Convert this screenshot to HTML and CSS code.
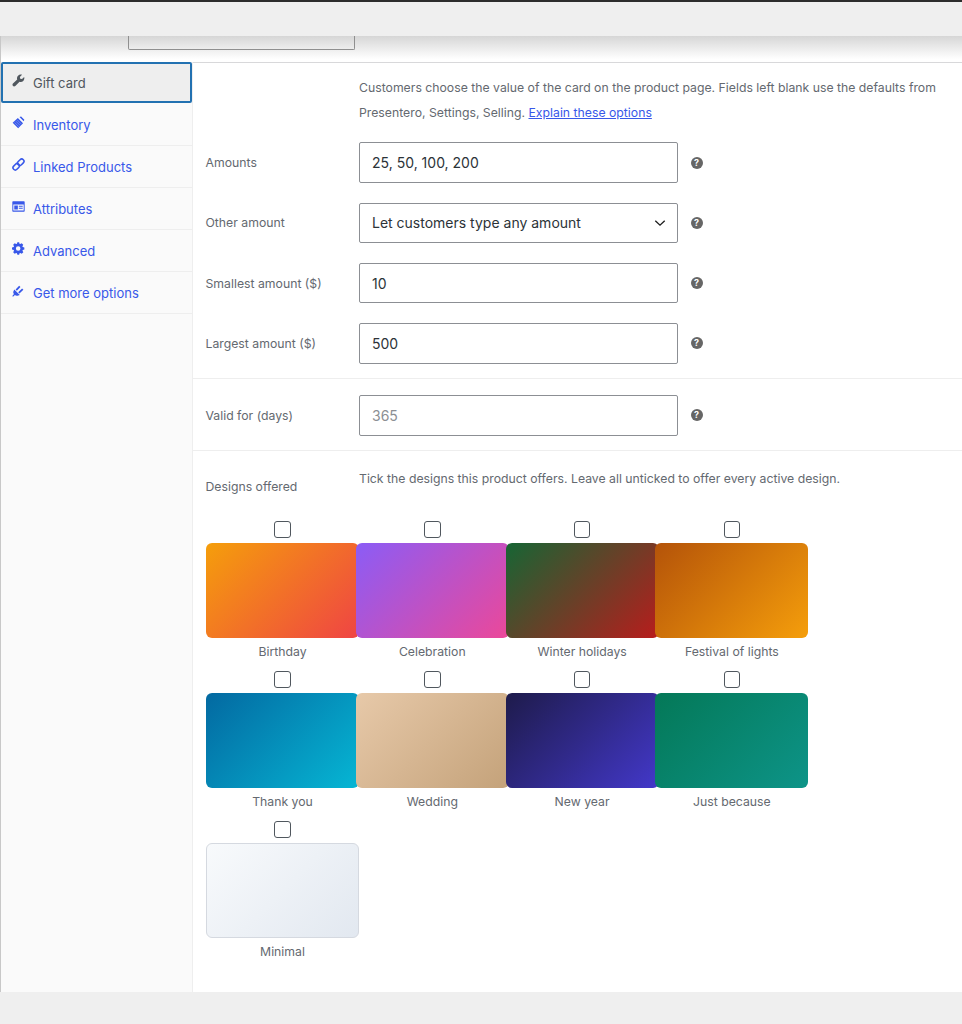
FILE: index.html
```html
<!DOCTYPE html>
<html lang="en">
<head>
    <meta charset="UTF-8">
    <title>Gift card options</title>
    <link rel="stylesheet" href="styles.css">
</head>
<body>
    <div class="topbar"></div>

    <div class="panel">
        <!-- What is left of the field above the tabs -->
        <div class="panel-head">
            <div class="cut-input"></div>
        </div>

        <div class="product-data">
            <ul class="tabs">
                <li class="tab active">
                    <svg class="tab-icon" viewBox="0 0 20 20"><path d="M18.700 4.600l-3.300 3.200-2.700-.6-.6-2.700L15.400 1.300c-2.100-.8-4.500-.3-6.100 1.300-1.500 1.500-2 3.700-1.300 5.700L1.500 14.800c-1 1-1 2.600 0 3.600.9 1 2.600 1 3.600 0l6.500-6.500c2 .7 4.200.2 5.700-1.300 1.600-1.600 2.100-4 1.400-6z"/></svg>
                    <span>Gift card</span>
                </li>
                <li class="tab">
                    <svg class="tab-icon" viewBox="0 0 20 20">
                        <path d="M9 3.200l8 8-7.500 7.800L1 10.500zM11.500 1.700L14 .700l5 5-1 2.500z"/>
                        <path class="stripes" d="M6 8l6.500 6.500M8 6l6.500 6.500M4 10l6.500 6.500"/>
                    </svg>
                    <span>Inventory</span>
                </li>
                <li class="tab">
                    <svg class="tab-icon" viewBox="0 0 20 20"><g fill="none" stroke="currentColor" stroke-width="2.400"><rect x="8" y="3" width="11" height="7" rx="3.500" transform="rotate(-45 13.500 6.500)"/><rect x="1" y="10" width="11" height="7" rx="3.500" transform="rotate(-45 6.500 13.500)"/></g></svg>
                    <span>Linked Products</span>
                </li>
                <li class="tab">
                    <svg class="tab-icon" viewBox="0 0 20 20"><path fill-rule="evenodd" d="M1.500 2h17c.5 0 1 .4 1 1v14c0 .6-.5 1-1 1h-17c-.5 0-1-.4-1-1V3c0-.6.500-1 1-1zm.5 5v9h16V7zm1.500 1.500h5.500v6H3.500zm7 .5h6v1.500h-6zm0 3h6v1.500h-6z"/></svg>
                    <span>Attributes</span>
                </li>
                <li class="tab">
                    <svg class="tab-icon" viewBox="0 0 20 20"><path fill-rule="evenodd" d="M19 11.700V8.300l-2.500-.6-.5-1.200 1.300-2.200-2.400-2.400-2.200 1.300-1.200-.5L11 .200H8.300l-.7 2.500-1.200.5-2.200-1.300-2.400 2.400 1.300 2.200-.5 1.200L0 8.300v3.400l2.600.6.500 1.200-1.300 2.200 2.400 2.400 2.200-1.300 1.200.5.700 2.500H11l.6-2.500 1.200-.5 2.200 1.300 2.400-2.400-1.300-2.200.5-1.200zM9.500 13.500a3.500 3.500 0 1 1 0-7 3.500 3.500 0 0 1 0 7z"/></svg>
                    <span>Advanced</span>
                </li>
                <li class="tab">
                    <svg class="tab-icon" viewBox="0 0 20 20"><path d="M3.500 8.500l8.500 8.500-3.500 1c-1.800.3-3 0-4-1L1.500 19.500.5 18.500 3 15.500c-.8-1-1.300-2.300-1-3.500zM5.500 8.500L11 2.500l2 2-5.500 6zM9.500 12.500l6-5.500 2 2-6 5.500z"/></svg>
                    <span>Get more options</span>
                </li>
            </ul>

            <div class="options">
                <div class="group">
                    <p class="intro">Customers choose the value of the card on the product page. Fields left blank use the defaults from Presentero, Settings, Selling. <a href="#">Explain these options</a></p>
                    <div class="field">
                        <label>Amounts</label>
                        <div class="control">25, 50, 100, 200</div>
                        <span class="help">?</span>
                    </div>
                    <div class="field">
                        <label>Other amount</label>
                        <div class="control select">
                            Let customers type any amount
                            <svg class="chevron" viewBox="0 0 14 8"><path d="M1.500 1.500L7 6.500l5.500-5"/></svg>
                        </div>
                        <span class="help">?</span>
                    </div>
                    <div class="field">
                        <label>Smallest amount ($)</label>
                        <div class="control">10</div>
                        <span class="help">?</span>
                    </div>
                    <div class="field">
                        <label>Largest amount ($)</label>
                        <div class="control">500</div>
                        <span class="help">?</span>
                    </div>
                </div>

                <div class="group group-valid">
                    <div class="field">
                        <label>Valid for (days)</label>
                        <div class="control placeholder">365</div>
                        <span class="help">?</span>
                    </div>
                </div>

                <div class="group-designs">
                    <div class="designs-head">
                        <label>Designs offered</label>
                        <p>Tick the designs this product offers. Leave all unticked to offer every active design.</p>
                    </div>
                    <div class="design-grid">
                        <div class="design"><span class="check"></span><div class="swatch birthday"></div><span class="name">Birthday</span></div>
                        <div class="design"><span class="check"></span><div class="swatch celebration"></div><span class="name">Celebration</span></div>
                        <div class="design"><span class="check"></span><div class="swatch winter"></div><span class="name">Winter holidays</span></div>
                        <div class="design"><span class="check"></span><div class="swatch festival"></div><span class="name">Festival of lights</span></div>
                        <div class="design"><span class="check"></span><div class="swatch thanks"></div><span class="name">Thank you</span></div>
                        <div class="design"><span class="check"></span><div class="swatch wedding"></div><span class="name">Wedding</span></div>
                        <div class="design"><span class="check"></span><div class="swatch newyear"></div><span class="name">New year</span></div>
                        <div class="design"><span class="check"></span><div class="swatch because"></div><span class="name">Just because</span></div>
                        <div class="design"><span class="check"></span><div class="swatch minimal"></div><span class="name">Minimal</span></div>
                    </div>
                </div>
            </div>
        </div>
    </div>
</body>
</html>
```

FILE: styles.css
```css
* {
    margin: 0;
    padding: 0;
    box-sizing: border-box;
}

body {
    height: 1024px;
    overflow: hidden;
    background: #efefef;
    font-family: Inter, "Liberation Sans", sans-serif;
    font-size: 12.250px;
    color: #646970;
}

/* Top strip */
.topbar {
    height: 36px;
    background: #efefef;
    border-top: 2px solid #2c2c2c;
}

.panel {
    height: 956px;
    background: #fff;
    border-left: 1px solid #c8c8c8;
}

/* The strip's shadow falls on this part of the panel */
.panel-head {
    height: 27px;
    margin-bottom: -1px;
    background: linear-gradient(#d6d6d6, #f4f4f4 65%, #fff 90%);
    border-bottom: 1px solid #d8d8da;
}

.cut-input {
    width: 227px;
    height: 14px;
    margin-left: 127px;
    border: 1px solid #8f8f8f;
    border-top: none;
    border-radius: 0 0 2px 2px;
}

.product-data {
    display: flex;
    height: 930px;
}

/* Tabs on the left */
.tabs {
    flex: none;
    width: 192px;
    list-style: none;
    background: #fafafa;
    border-right: 1px solid #eee;
}

.tab {
    display: flex;
    align-items: center;
    gap: 8px;
    height: 42px;
    padding-left: 11px;
    font-size: 13px;
    color: #3858e9;
    border-bottom: 1px solid #eee;
}

.tab.active {
    height: 41px;
    margin-bottom: 1px;
    color: #50575e;
    background: #eee;
    border: 2px solid #2271b1;
    border-radius: 2px;
    padding-left: 9px;
}

.tab-icon {
    flex: none;
    width: 13px;
    height: 13px;
    margin-top: -5px;
    fill: currentColor;
}

.stripes {
    fill: none;
    stroke: #a9b7f5;
    stroke-width: 0.800;
}

/* Fields on the right */
.options {
    flex: 1;
}

.group {
    padding: 13.300px 0 14.700px 13px;
    border-bottom: 1px solid #eee;
}

.group-valid {
    padding-top: 15.800px;
}

.intro {
    width: 590px;
    margin: 0 0 17px 153px;
    line-height: 25px;
}

.intro a {
    color: #3858e9;
}

.field {
    display: flex;
    align-items: center;
    height: 40.500px;
}

.field + .field {
    margin-top: 19.750px;
}

.field label {
    width: 153px;
    margin-left: -0.500px;
    margin-right: 0.500px;
}

.control {
    display: flex;
    align-items: center;
    justify-content: space-between;
    width: 319px;
    height: 40.500px;
    padding: 0 12px;
    font-size: 14px;
    color: #2c3338;
    background: #fff;
    border: 1px solid #8c8f94;
    border-radius: 2px;
}

.placeholder {
    color: #8c8f94;
}

.chevron {
    width: 12px;
    height: 8px;
    margin-right: -1px;
    fill: none;
    stroke: #1e1e1e;
    stroke-width: 1.600;
}

.help {
    width: 12px;
    height: 12px;
    margin-left: 12.500px;
    font-size: 9px;
    font-weight: 700;
    line-height: 12px;
    text-align: center;
    color: #fff;
    background: #666;
    border-radius: 50%;
}

/* Design picker */
.group-designs {
    padding: 19.700px 0 0 13px;
}

.designs-head {
    display: flex;
    align-items: flex-start;
}

.designs-head label {
    width: 153px;
    margin-left: -0.500px;
    margin-right: 0.500px;
    padding-top: 8px;
}

.design-grid {
    display: grid;
    grid-template-columns: repeat(4, 149.800px);
    grid-auto-rows: 150px;
    margin-top: 27.500px;
}

.design {
    display: flex;
    flex-direction: column;
    align-items: center;
    width: 153px;
}

.check {
    width: 16.500px;
    height: 16.500px;
    margin-bottom: 5px;
    background: #fff;
    border: 1.500px solid #50575e;
    border-radius: 3px;
}

.swatch {
    width: 100%;
    height: 95px;
    margin-bottom: 6px;
    border-radius: 6px;
}

.name {
    line-height: 16px;
}

.birthday { background: linear-gradient(135deg, #f59e0b, #ef4444); }
.celebration { background: linear-gradient(135deg, #8b5cf6, #ec4899); }
.winter { background: linear-gradient(135deg, #166534, #b91c1c); }
.festival { background: linear-gradient(135deg, #b45309, #f59e0b); }
.thanks { background: linear-gradient(135deg, #0369a1, #06b6d4); }
.wedding { background: linear-gradient(135deg, #e7c9a9, #c4a27a); }
.newyear { background: linear-gradient(135deg, #1e1b4b, #4338ca); }
.because { background: linear-gradient(135deg, #047857, #0d9488); }
.minimal { background: linear-gradient(135deg, #f8fafc, #e2e8f0); border: 1px solid #d5d9e0; }
```
